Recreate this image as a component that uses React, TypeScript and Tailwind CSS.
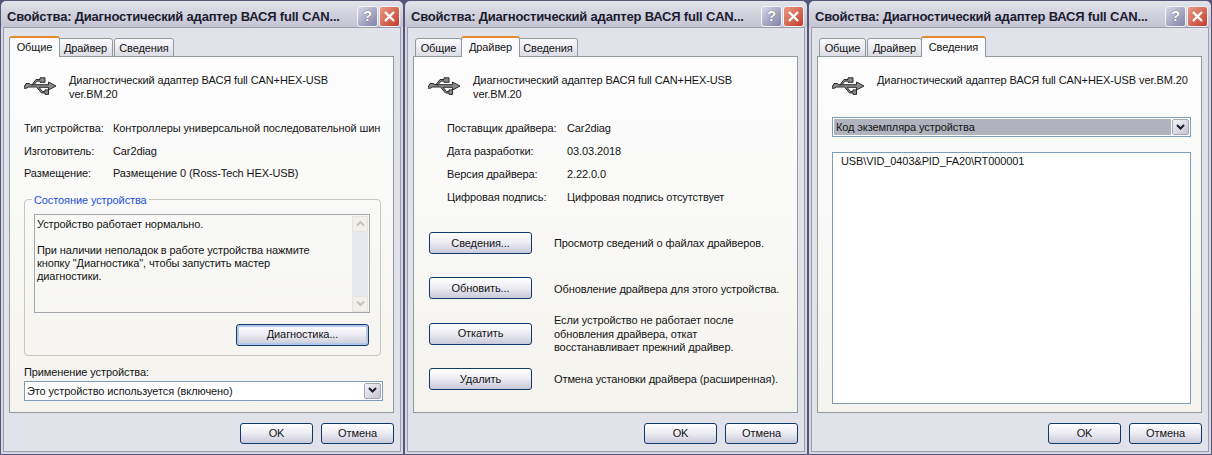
import type { ReactNode } from 'react'

const font = "font-['Liberation_Sans',sans-serif]"

function UsbIcon() {
  return (
    <svg width="34" height="22" viewBox="0 0 34 22" className="shrink-0">
      <g stroke="#2c2c2c" strokeWidth="1" fill="#8a8a8a" strokeLinejoin="round">
        <path d="M2 7.5h3l2 1.2h17.5v-2.7l7.5 4-7.5 4v-2.7h-9.5l3.5 4.2h2.5v-1.6h3.5v4.5h-3.5v-1.4h-3.5l-5-6h-8l-2 1.2h-3z" />
        <path d="M8 8.7l4-5.2h4v-1.7h5v4.5h-5v-1.2h-3l-3 3.6z" />
      </g>
    </svg>
  )
}

function TitleBar() {
  return (
    <div className="flex h-[26px] shrink-0 justify-between rounded-t-[5px] bg-gradient-to-b from-[#e4e4ec] via-[#d2d2de] to-[#c4c4d4] pl-[6px] pr-[3px]">
      <span className={`pt-[8px] text-[13px] font-bold leading-[15px] tracking-[-0.2px] text-[#1c1c30] ${font}`}>
        Свойства: Диагностический адаптер ВАСЯ full CAN...
      </span>
      <div className="flex gap-[1px] pt-[5px]">
        <div className="flex h-[21px] w-[21px] items-center justify-center rounded-[3px] border border-[#f4f4f8] bg-gradient-to-br from-[#d8d8e8] to-[#8080a8] text-[15px] font-bold text-white [text-shadow:0_0_1px_#333]">
          ?
        </div>
        <div className="flex h-[21px] w-[21px] items-center justify-center rounded-[3px] border border-[#f4f4f8] bg-gradient-to-br from-[#e89a86] to-[#c03a28]">
          <svg width="13" height="13" viewBox="0 0 13 13">
            <path d="M2 2l9 9M11 2l-9 9" stroke="#fff" strokeWidth="2.4" />
          </svg>
        </div>
      </div>
    </div>
  )
}

function Tabs({ active }: { active: number }) {
  const names = ['Общие', 'Драйвер', 'Сведения']
  const widths = ['w-[47px]', 'w-[55px]', 'w-[60px]']
  const activeWidths = ['w-[51px]', 'w-[59px]', 'w-[65px]']
  return (
    <div className="relative z-10 -mb-px ml-[2px] flex h-[21px] items-end">
      {names.map((name, i) => {
        if (i === active) {
          return (
            <div
              key={name}
              className={`${activeWidths[i]} -mx-[2px] z-10 flex h-[21px] items-center justify-center rounded-t-[3px] border-x border-[#919b9c] border-t-[2px] border-t-[#e68b2c] bg-[#fcfcfe] pb-[1px]`}
            >
              {name}
            </div>
          )
        }
        return (
          <div
            key={name}
            className={`${widths[i]} mr-[1px] flex h-[19px] items-center justify-center rounded-t-[3px] border border-[#919b9c] bg-gradient-to-b from-[#fbfbfd] to-[#dcdce6] pt-[1px]`}
          >
            {name}
          </div>
        )
      })}
    </div>
  )
}

function Button({ children, width, focused }: { children: ReactNode; width: string; focused?: boolean }) {
  return (
    <div
      className={`${width} flex h-full items-center justify-center rounded-[3px] border border-[#0f3a6a] bg-gradient-to-b from-[#ffffff] via-[#ecebf2] to-[#c9c9da] ${
        focused ? 'shadow-[inset_0_0_0_2px_#b4c8ea]' : ''
      }`}
    >
      {children}
    </div>
  )
}

function ArrowBox() {
  return (
    <div className="flex w-[17px] items-center justify-center rounded-[2px] border border-[#a4a4b8] bg-gradient-to-br from-[#f4f4f8] to-[#c4c4d4]">
      <svg width="9" height="7" viewBox="0 0 9 7">
        <path d="M1 1l3.5 3.5L8 1" stroke="#1c1c2c" strokeWidth="2" fill="none" />
      </svg>
    </div>
  )
}

function DeviceHeader({ wrap }: { wrap?: boolean }) {
  return (
    <div className="mt-[16px] flex h-[28px] items-start">
      <div className="w-[45px] shrink-0 pt-[3px]">
        <UsbIcon />
      </div>
      <div className="whitespace-nowrap leading-[14px]">
        Диагностический адаптер ВАСЯ full CAN+HEX-USB{wrap ? <br /> : ' '}ver.BM.20
      </div>
    </div>
  )
}

function GeneralTab() {
  const rows = [
    ['Тип устройства:', 'Контроллеры универсальной последовательной шин'],
    ['Изготовитель:', 'Car2diag'],
    ['Размещение:', 'Размещение 0 (Ross-Tech HEX-USB)'],
  ]
  return (
    <>
      <DeviceHeader wrap />
      <div className="mt-[16px]">
        {rows.map(([label, value]) => (
          <div key={label} className="flex h-[22.5px] items-center">
            <span className="w-[89px] shrink-0">{label}</span>
            <span className="whitespace-nowrap">{value}</span>
          </div>
        ))}
      </div>
      <div className="relative mt-[14px] h-[157px] w-[357px] rounded-[4px] border border-[#c8c8c0] pl-[9px] pr-[10px] pt-[14px]">
        <span className="absolute -top-[8px] left-[7px] bg-[#fafafa] px-[2px] text-[#1a50d8]">Состояние устройства</span>
        <div className="flex h-[99px] justify-between border border-[#a4a8ac] pl-[2px] pr-[1px] pt-[1px]">
          <div className="pt-[2px] leading-[13px]">
            Устройство работает нормально.
            <br />
            <br />
            При наличии неполадок в работе устройства нажмите
            <br />
            кнопку "Диагностика", чтобы запустить мастер
            <br />
            диагностики.
          </div>
          <div className="flex w-[16px] flex-col justify-between bg-[#e8e8f0]">
            <div className="flex h-[16px] items-center justify-center rounded-[2px] border border-[#e4e4dc] bg-[#f0f0e8]">
              <svg width="9" height="7" viewBox="0 0 9 7">
                <path d="M1 5.5L4.5 2 8 5.5" stroke="#c4c4bc" strokeWidth="2" fill="none" />
              </svg>
            </div>
            <div className="flex h-[16px] items-center justify-center rounded-[2px] border border-[#e4e4dc] bg-[#f0f0e8]">
              <svg width="9" height="7" viewBox="0 0 9 7">
                <path d="M1 1.5L4.5 5 8 1.5" stroke="#c4c4bc" strokeWidth="2" fill="none" />
              </svg>
            </div>
          </div>
        </div>
        <div className="mr-[1px] mt-[11px] flex h-[22px] justify-end">
          <Button width="w-[133px]" focused>
            Диагностика...
          </Button>
        </div>
      </div>
      <div className="mt-[9px] leading-[14px]">Применение устройства:</div>
      <div className="mt-[2px] flex h-[20px] w-[359px] justify-between border border-[#7f9db9] bg-white py-[1px] pl-[2px] pr-[1px]">
        <span className="leading-[17px]">Это устройство используется (включено)</span>
        <ArrowBox />
      </div>
    </>
  )
}

function DriverTab() {
  const rows = [
    ['Поставщик драйвера:', 'Car2diag'],
    ['Дата разработки:', '03.03.2018'],
    ['Версия драйвера:', '2.22.0.0'],
    ['Цифровая подпись:', 'Цифровая подпись отсутствует'],
  ]
  const actions = [
    ['Сведения...', 'Просмотр сведений о файлах драйверов.'],
    ['Обновить...', 'Обновление драйвера для этого устройства.'],
    ['Откатить', 'Если устройство не работает после\nобновления драйвера, откат\nвосстанавливает прежний драйвер.'],
    ['Удалить', 'Отмена установки драйвера (расширенная).'],
  ]
  return (
    <>
      <DeviceHeader wrap />
      <div className="ml-[19px] mt-[16px]">
        {rows.map(([label, value]) => (
          <div key={label} className="flex h-[23px] items-center">
            <span className="w-[120px] shrink-0">{label}</span>
            <span>{value}</span>
          </div>
        ))}
      </div>
      <div className="ml-[1px] mt-[23px] flex flex-col gap-[23.3px]">
        {actions.map(([label, text]) => (
          <div key={label} className="flex h-[22px] items-center gap-[22px]">
            <Button width="w-[103px]">{label}</Button>
            <span className="whitespace-pre pt-[2px] leading-[13.5px]">{text}</span>
          </div>
        ))}
      </div>
    </>
  )
}

function DetailsTab() {
  return (
    <>
      <DeviceHeader />
      <div className="mt-[16px] flex h-[20px] w-[359px] justify-between border border-[#7f9db9] bg-white p-[1px]">
        <span className="mr-[1px] flex-1 bg-[#b0b2be] pl-[2px] leading-[17px]">Код экземпляра устройства</span>
        <ArrowBox />
      </div>
      <div className="mt-[15px] h-[252px] w-[359px] border border-[#7f9db9] bg-white pl-[8px] pt-[1px] leading-[14px]">
        USB\VID_0403&amp;PID_FA20\RT000001
      </div>
    </>
  )
}

function Dialog({ active }: { active: number }) {
  return (
    <div className="flex h-[455px] w-[404px] shrink-0 flex-col border border-[#56567a]">
      <TitleBar />
      <div className="flex flex-1 bg-[#d8d8e4] px-[2px] pb-[2px]">
        <div className="flex flex-1 flex-col border border-[#9c9cac] bg-[#e2e2ea] pl-[5px] pt-[8px]">
          <Tabs active={active} />
          <div className="h-[357px] w-[385px] border border-[#919b9c] bg-gradient-to-b from-[#fdfdfe] to-[#f4f3ee] px-[14px]">
            {active === 0 && <GeneralTab />}
            {active === 1 && <DriverTab />}
            {active === 2 && <DetailsTab />}
          </div>
          <div className="ml-[231px] mt-[10px] flex h-[21px] w-[154px] justify-between">
            <Button width="w-[73px]">OK</Button>
            <Button width="w-[73px]">Отмена</Button>
          </div>
        </div>
      </div>
    </div>
  )
}

export default function App() {
  return (
    <div className={`flex h-[455px] w-[1212px] overflow-hidden bg-[#56567a] text-[11px] tracking-[-0.1px] text-[#141414] ${font}`}>
      <Dialog active={0} />
      <Dialog active={1} />
      <Dialog active={2} />
    </div>
  )
}
